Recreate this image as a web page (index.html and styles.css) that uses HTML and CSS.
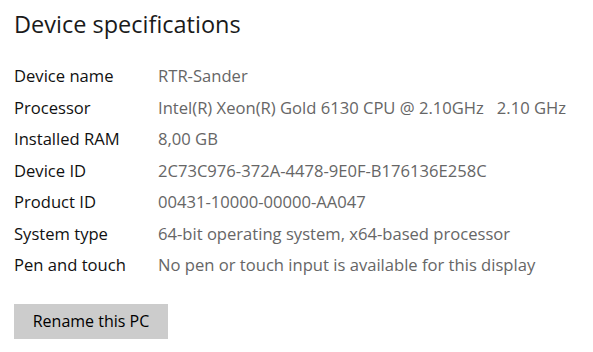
FILE: index.html
```html
<!DOCTYPE html>
<html lang="en">
<head>
<meta charset="utf-8">
<title>Device specifications</title>
<link rel="stylesheet" href="styles.css">
</head>
<body>
<main class="panel">
  <h1 class="title">Device specifications</h1>
  <dl class="specs">
    <div class="row"><dt>Device name</dt><dd>RTR-Sander</dd></div>
    <div class="row"><dt>Processor</dt><dd>Intel(R) Xeon(R) Gold 6130 CPU @ 2.10GHz&nbsp;&nbsp;&nbsp;2.10 GHz</dd></div>
    <div class="row"><dt>Installed RAM</dt><dd>8,00 GB</dd></div>
    <div class="row"><dt>Device ID</dt><dd>2C73C976-372A-4478-9E0F-B176136E258C</dd></div>
    <div class="row"><dt>Product ID</dt><dd>00431-10000-00000-AA047</dd></div>
    <div class="row"><dt>System type</dt><dd>64-bit operating system, x64-based processor</dd></div>
    <div class="row"><dt>Pen and touch</dt><dd>No pen or touch input is available for this display</dd></div>
  </dl>
  <button class="btn" type="button">Rename this PC</button>
</main>
</body>
</html>
```
FILE: styles.css
```css
html, body {
  margin: 0;
  padding: 0;
  background: #ffffff;
}
body {
  font-family: "Open Sans", "Noto Sans", sans-serif;
  color: #000;
}
.panel {
  padding: 8px 14px 0 14px;
}
.title {
  margin: 0;
  font-weight: 400;
  font-size: 23.5px;
  line-height: 32px;
  color: #1a1a1a;
}
.specs {
  margin: 20px 0 0 0;
  display: flex;
  flex-direction: column;
}
.row {
  display: flex;
  height: 31.5px;
  align-items: center;
  font-size: 16.6px;
}
.row dt {
  width: 144px;
  flex: none;
  color: #111;
}
.row dd {
  margin: 0;
  color: #666666;
  white-space: nowrap;
}
.btn {
  margin-top: 23px;
  width: 154px;
  height: 35px;
  border: none;
  background: #cccccc;
  font-family: inherit;
  font-size: 16px;
  color: #000;
  padding: 0;
}
```
